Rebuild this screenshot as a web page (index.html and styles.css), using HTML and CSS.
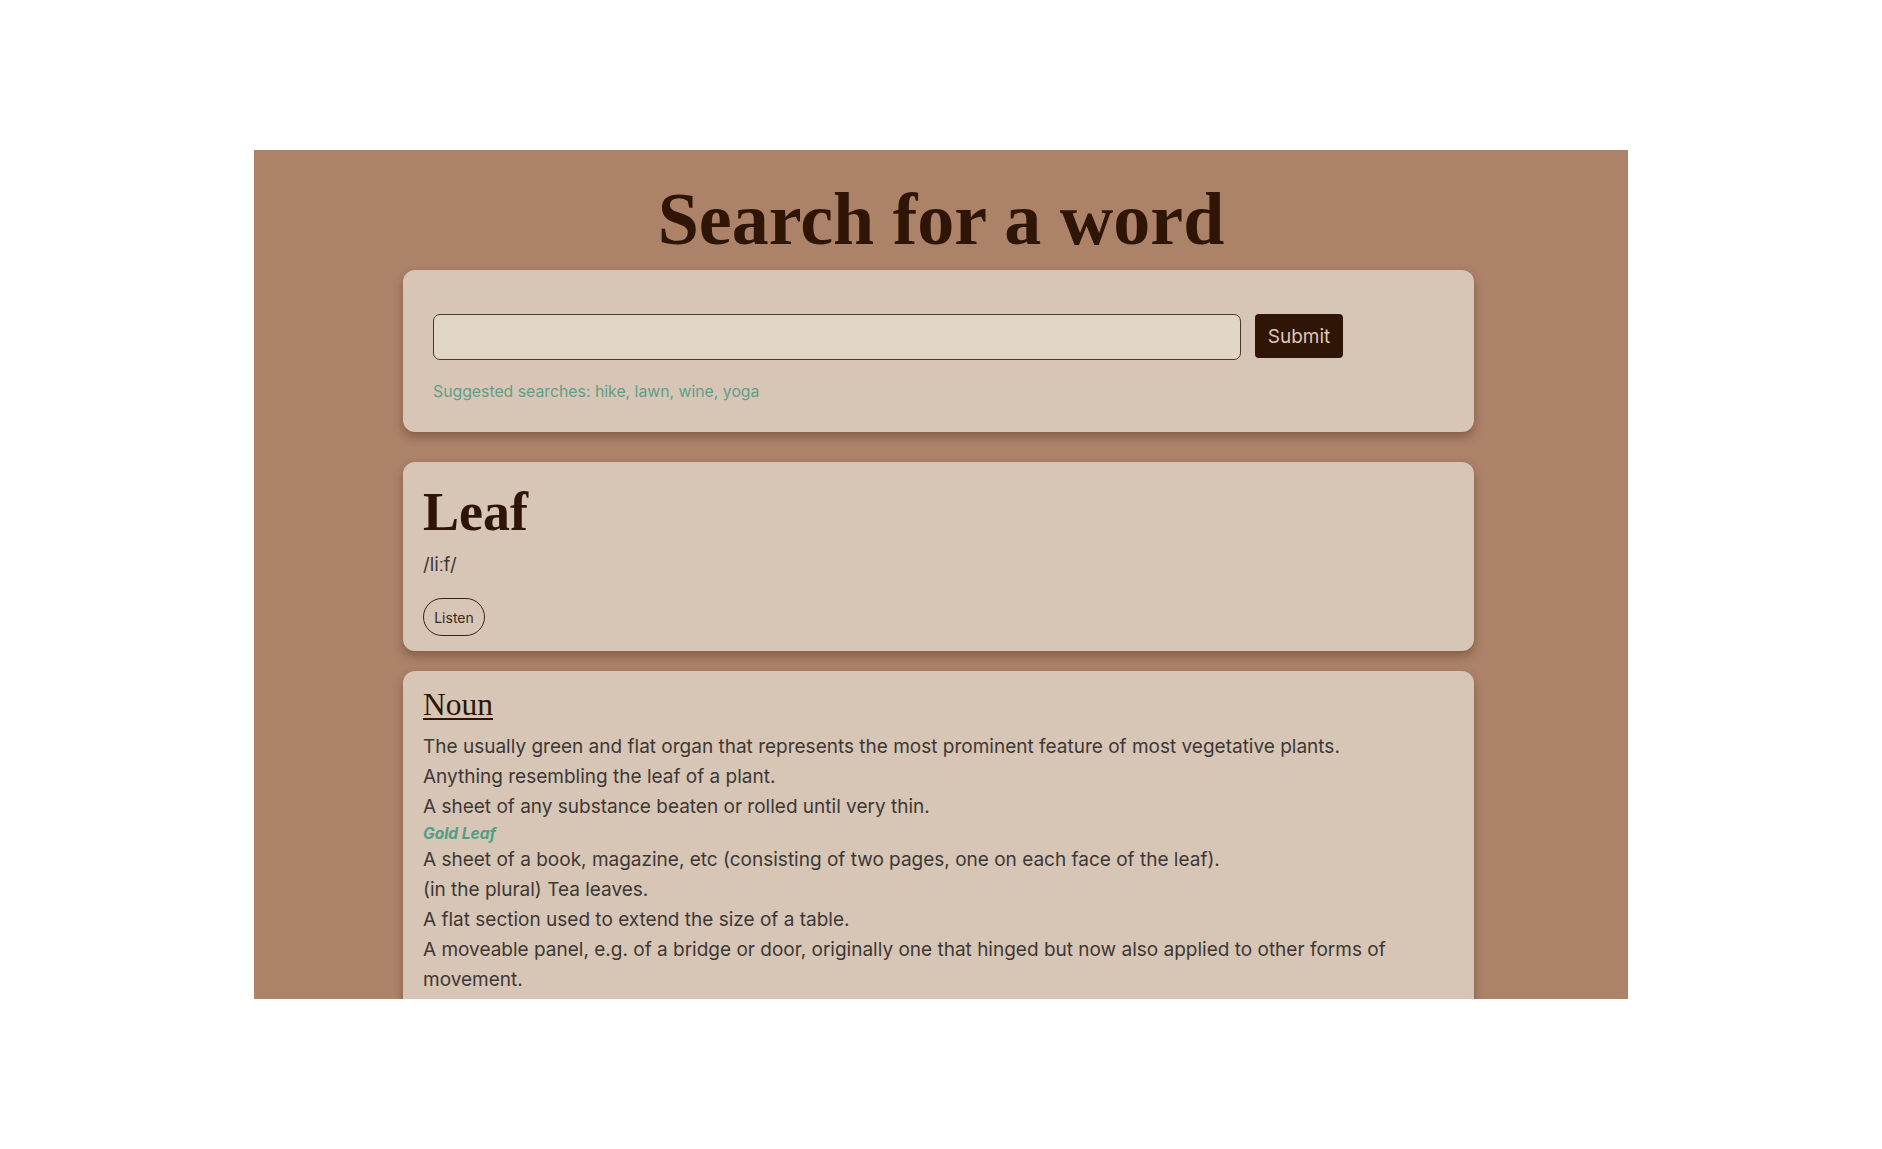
FILE: index.html
```html
<!DOCTYPE html>
<html lang="en">
<head>
<meta charset="utf-8">
<title>Dictionary</title>
<link rel="stylesheet" href="styles.css">
</head>
<body>
<main class="page">
  <h1 class="title">Search for a word</h1>

  <section class="card search-card">
    <form class="search-row">
      <input class="search-input" type="text" aria-label="Search">
      <button class="submit-btn" type="button">Submit</button>
    </form>
    <p class="suggested">Suggested searches: hike, lawn, wine, yoga</p>
  </section>

  <section class="card word-card">
    <h2 class="word">Leaf</h2>
    <p class="phonetic">/liːf/</p>
    <button class="listen-btn" type="button">Listen</button>
  </section>

  <section class="card meaning-card">
    <h3 class="pos">Noun</h3>
    <ul class="defs">
      <li class="def">The usually green and flat organ that represents the most prominent feature of most vegetative plants.</li>
      <li class="def">Anything resembling the leaf of a plant.</li>
      <li class="def">A sheet of any substance beaten or rolled until very thin.</li>
      <li class="example">Gold Leaf</li>
      <li class="def">A sheet of a book, magazine, etc (consisting of two pages, one on each face of the leaf).</li>
      <li class="def">(in the plural) Tea leaves.</li>
      <li class="def">A flat section used to extend the size of a table.</li>
      <li class="def">A moveable panel, e.g. of a bridge or door, originally one that hinged but now also applied to other forms of movement.</li>
    </ul>
  </section>
</main>
</body>
</html>
```

FILE: styles.css
```css
* {
  box-sizing: border-box;
}

html, body {
  margin: 0;
  padding: 0;
  background: #ffffff;
}

.page {
  width: 1374px;
  height: 849px;
  margin: 150px auto 0;
  padding-top: 29px;
  background: #ac8269;
  overflow: hidden;
  font-family: Inter, "Noto Sans", sans-serif;
}

.title {
  margin: 0 0 11px;
  text-align: center;
  font-family: "Liberation Serif", serif;
  font-weight: 700;
  font-size: 74px;
  line-height: 80px;
  color: #2e1505;
}

.card {
  width: 1071px;
  margin-left: 149px;
  background: #d7c5b5;
  border-radius: 12px;
  box-shadow: 0 5px 10px rgba(60, 30, 10, 0.35);
}

/* search card */
.search-card {
  height: 162px;
  padding: 44px 30px 0;
}

.search-row {
  display: flex;
  align-items: flex-start;
  gap: 14px;
  margin: 0;
}

.search-input {
  width: 808px;
  height: 46px;
  margin: 0;
  background: #e1d5c5;
  border: 1px solid #4a3a2e;
  border-radius: 7px;
  outline: none;
  font-family: Inter, sans-serif;
  font-size: 18px;
}

.submit-btn {
  width: 88px;
  height: 44px;
  margin: 0;
  padding: 0;
  border: none;
  border-radius: 4px;
  background: #2e1505;
  color: #dcc8b6;
  font-family: Inter, sans-serif;
  font-size: 19px;
}

.suggested {
  margin: 22px 0 0;
  font-size: 15.8px;
  line-height: 19px;
  color: #5f9f88;
}

/* word card */
.word-card {
  margin-top: 30px;
  padding: 20px 20px 15px;
  display: flex;
  flex-direction: column;
  align-items: flex-start;
}

.word {
  margin: 0;
  font-family: "Liberation Serif", serif;
  font-weight: 700;
  font-size: 54px;
  line-height: 60px;
  color: #2e1505;
}

.phonetic {
  margin: 11px 0 0;
  font-size: 18.5px;
  line-height: 22px;
  color: #3d3836;
}

.listen-btn {
  margin-top: 23px;
  width: 62px;
  height: 38px;
  padding: 0;
  border: 1.5px solid #3a2212;
  border-radius: 19px;
  background: transparent;
  color: #3a2a20;
  font-family: Inter, sans-serif;
  font-size: 14px;
}

/* meaning card */
.meaning-card {
  margin-top: 20px;
  padding: 16px 20px 20px;
}

.pos {
  margin: 0 0 10px;
  font-family: "Liberation Serif", serif;
  font-weight: 400;
  font-size: 31.5px;
  line-height: 35px;
  color: #2e1505;
  text-decoration: underline;
  text-decoration-thickness: 2px;
  text-underline-offset: 3px;
}

.defs {
  margin: 0;
  padding: 0;
  list-style: none;
}

.def {
  font-size: 19px;
  line-height: 30px;
  color: #3d3836;
}

.example {
  font-size: 15.5px;
  line-height: 23px;
  font-weight: 700;
  font-style: italic;
  color: #4f9f88;
}
```
